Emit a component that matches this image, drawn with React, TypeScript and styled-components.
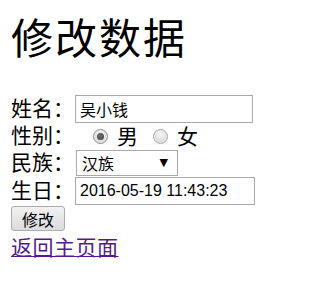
import React from "react";
import styled, { createGlobalStyle } from "styled-components";

const GlobalStyle = createGlobalStyle`
  html, body {
    margin: 0;
    padding: 0;
    background: #ffffff;
  }
  body {
    font-family: "Noto Sans CJK SC", "Noto Sans", sans-serif;
    color: #000000;
  }
`;

const Page = styled.div`
  padding: 0 0 0 11px;
  width: 282px;
`;

const Title = styled.h1`
  margin: 15px 0 37px 0;
  height: 42px;
  font-size: 42px;
  line-height: 42px;
  font-weight: normal;
  letter-spacing: 2px;
  white-space: nowrap;
`;

const Form = styled.form`
  display: flex;
  flex-direction: column;
  margin: 0;
`;

const Row = styled.div<{ $h: number }>`
  display: flex;
  align-items: center;
  height: ${(p) => p.$h}px;
`;

const Label = styled.span`
  width: 64px;
  flex: none;
  font-size: 21px;
  line-height: 1;
  padding-bottom: 3px;
  white-space: nowrap;
`;

const TextInput = styled.input<{ $w: number }>`
  box-sizing: border-box;
  width: ${(p) => p.$w}px;
  height: 28px;
  margin: 0;
  padding: 0 4px;
  border: 1px solid #a9a9a9;
  background: #ffffff;
  font-family: "Liberation Sans", "Noto Sans CJK SC", sans-serif;
  font-size: 16px;
  color: #000000;
  outline: none;
`;

const RadioGroup = styled.div`
  display: flex;
  align-items: center;
  margin-left: 18px;
`;

const RadioDot = styled.span<{ $checked?: boolean }>`
  box-sizing: border-box;
  width: 15px;
  height: 15px;
  border-radius: 50%;
  border: 1px solid ${(p) => (p.$checked ? "#8c8c8c" : "#a8a8a8")};
  background: radial-gradient(circle at 50% 35%, #f6f6f6 0%, #e0e0e0 55%, #c8c8c8 100%);
  box-shadow: inset 0 0 0 1px #ececec;
  display: flex;
  align-items: center;
  justify-content: center;
  flex: none;
  &::after {
    content: "";
    display: ${(p) => (p.$checked ? "block" : "none")};
    width: 7px;
    height: 7px;
    border-radius: 50%;
    background: radial-gradient(circle at 45% 40%, #6e6e6e, #3f3f3f);
  }
`;

const RadioText = styled.span<{ $gapAfter: number }>`
  font-size: 21px;
  line-height: 1;
  padding-bottom: 2px;
  margin-left: 9px;
  margin-right: ${(p) => p.$gapAfter}px;
`;

const Select = styled.div`
  box-sizing: border-box;
  width: 102px;
  height: 26px;
  margin-left: 1px;
  border: 1px solid #a9a9a9;
  background: #ffffff;
  display: flex;
  align-items: center;
  justify-content: space-between;
  padding: 0 9px 0 5px;
  font-size: 16px;
`;

const Arrow = styled.span`
  font-family: "DejaVu Sans", sans-serif;
  font-size: 11px;
  line-height: 1;
`;

const Button = styled.button`
  box-sizing: border-box;
  width: 54px;
  height: 25px;
  margin: 1px 0 0 0;
  padding: 0;
  border: 1px solid #acacac;
  border-radius: 3px;
  background: linear-gradient(#f2f2f2, #e6e6e6 50%, #dcdcdc);
  font-family: "Noto Sans CJK SC", sans-serif;
  font-size: 16px;
  color: #000000;
  line-height: 1;
`;

const BackLink = styled.a`
  display: inline-block;
  margin-top: 3px;
  font-size: 21px;
  line-height: 24px;
  letter-spacing: 0.5px;
  color: #551a8b;
  text-decoration-line: underline;
  text-decoration-color: #551a8b;
  text-decoration-thickness: 1px;
  white-space: nowrap;
`;

export default function App() {
  return (
    <>
      <GlobalStyle />
      <Page>
        <Title>修改数据</Title>
        <Form onSubmit={(e) => e.preventDefault()}>
          <Row $h={29}>
            <Label>姓名：</Label>
            <TextInput $w={178} defaultValue="吴小钱" />
          </Row>
          <Row $h={26}>
            <Label>性别：</Label>
            <RadioGroup>
              <RadioDot $checked />
              <RadioText $gapAfter={15}>男</RadioText>
              <RadioDot />
              <RadioText $gapAfter={0}>女</RadioText>
            </RadioGroup>
          </Row>
          <Row $h={27}>
            <Label>民族：</Label>
            <Select>
              <span>汉族</span>
              <Arrow>▼</Arrow>
            </Select>
          </Row>
          <Row $h={29}>
            <Label>生日：</Label>
            <TextInput $w={180} defaultValue="2016-05-19 11:43:23" />
          </Row>
          <div>
            <Button type="submit">修改</Button>
          </div>
        </Form>
        <BackLink href="#">返回主页面</BackLink>
      </Page>
    </>
  );
}
